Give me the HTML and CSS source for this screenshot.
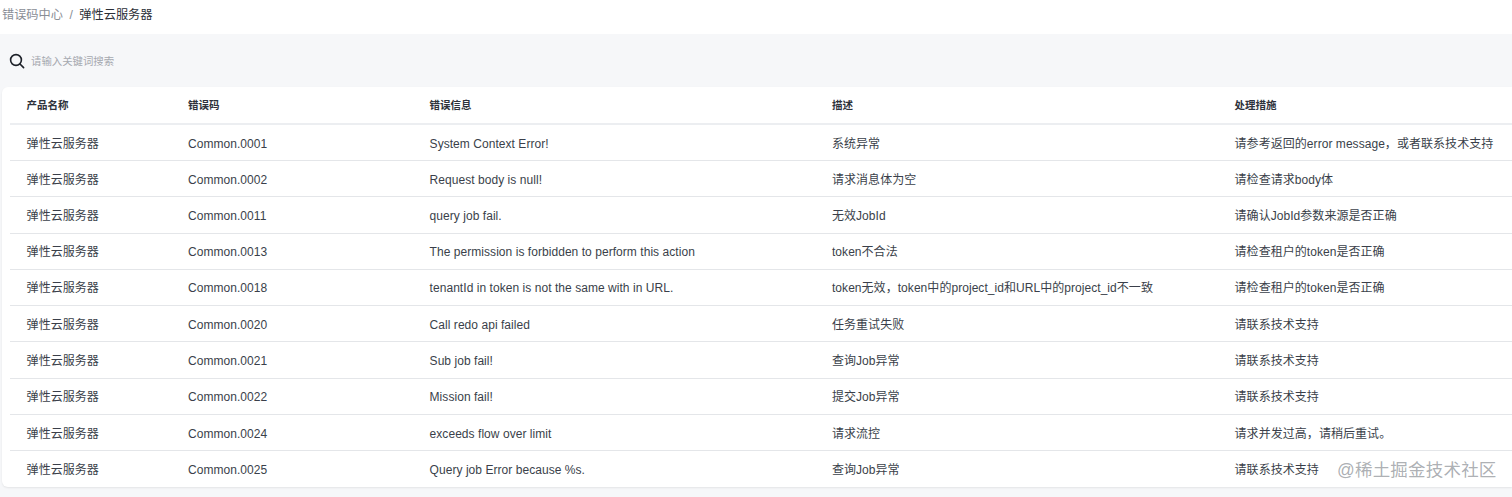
FILE: index.html
```html
<!DOCTYPE html>
<html lang="zh-CN">
<head>
<meta charset="utf-8">
<title>弹性云服务器</title>
<link rel="stylesheet" href="styles.css">
</head>
<body>
<nav class="crumbs"><span class="crumb-link">错误码中心</span><span class="crumb-sep">/</span><span class="crumb-current">弹性云服务器</span></nav>
<main class="content">
  <div class="search">
    <svg class="search-icon" width="16" height="16" viewBox="0 0 16 16" aria-hidden="true"><circle cx="7" cy="7" r="5.4" fill="none" stroke="#1d2129" stroke-width="1.6"/><path d="M11 11l3.6 3.6" fill="none" stroke="#1d2129" stroke-width="1.6" stroke-linecap="round"/></svg>
    <span class="search-text">请输入关键词搜索</span>
  </div>
  <section class="card">
    <table class="codes">
      <colgroup><col class="c1"><col class="c2"><col class="c3"><col class="c4"><col class="c5"></colgroup>
      <thead><tr><th>产品名称</th><th>错误码</th><th>错误信息</th><th>描述</th><th>处理措施</th></tr></thead>
      <tbody>
        <tr><td>弹性云服务器</td><td>Common.0001</td><td>System Context Error!</td><td>系统异常</td><td>请参考返回的error message，或者联系技术支持</td></tr>
        <tr><td>弹性云服务器</td><td>Common.0002</td><td>Request body is null!</td><td>请求消息体为空</td><td>请检查请求body体</td></tr>
        <tr><td>弹性云服务器</td><td>Common.0011</td><td>query job fail.</td><td>无效JobId</td><td>请确认JobId参数来源是否正确</td></tr>
        <tr><td>弹性云服务器</td><td>Common.0013</td><td>The permission is forbidden to perform this action</td><td>token不合法</td><td>请检查租户的token是否正确</td></tr>
        <tr><td>弹性云服务器</td><td>Common.0018</td><td>tenantId in token is not the same with in URL.</td><td>token无效，token中的project_id和URL中的project_id不一致</td><td>请检查租户的token是否正确</td></tr>
        <tr><td>弹性云服务器</td><td>Common.0020</td><td>Call redo api failed</td><td>任务重试失败</td><td>请联系技术支持</td></tr>
        <tr><td>弹性云服务器</td><td>Common.0021</td><td>Sub job fail!</td><td>查询Job异常</td><td>请联系技术支持</td></tr>
        <tr><td>弹性云服务器</td><td>Common.0022</td><td>Mission fail!</td><td>提交Job异常</td><td>请联系技术支持</td></tr>
        <tr><td>弹性云服务器</td><td>Common.0024</td><td>exceeds flow over limit</td><td>请求流控</td><td>请求并发过高，请稍后重试。</td></tr>
        <tr><td>弹性云服务器</td><td>Common.0025</td><td>Query job Error because %s.</td><td>查询Job异常</td><td>请联系技术支持</td></tr>
      </tbody>
    </table>
  </section>
</main>
<div class="watermark">@稀土掘金技术社区</div>
</body>
</html>
```

FILE: styles.css
```css
* { box-sizing: border-box; }
html, body { margin: 0; padding: 0; }
body {
  position: relative;
  height: 497px;
  overflow: hidden;
  background: #f6f7f9;
  color: #3a3f4a;
  font-family: "Liberation Sans", "Noto Sans CJK SC", sans-serif;
  font-size: 12px;
}
.crumbs {
  display: flex;
  align-items: center;
  height: 34px;
  padding: 0 0 4px 2px;
  background: #fff;
  font-size: 12.2px;
  line-height: 20px;
}
.crumb-link { color: #8a8e96; }
.crumb-sep { margin: 0 6.5px; color: #8a8e96; }
.crumb-current { color: #2b2f38; }
.content { padding-left: 2px; }
.search {
  display: flex;
  align-items: center;
  height: 53px;
  padding: 0 0 0 7px;
}
.search-icon { flex: none; }
.search-text { margin-left: 6px; font-size: 10.4px; color: #a6a9b0; }
.card {
  height: 400px;
  padding-left: 8px;
  background: #fff;
  border-radius: 6px 0 0 6px;
  box-shadow: 0 1px 2px rgba(0, 0, 0, 0.08);
}
.codes {
  width: 1502px;
  height: 400px;
  table-layout: fixed;
  border-collapse: collapse;
}
.c1 { width: 161.4px; }
.c2 { width: 241.6px; }
.c3 { width: 402.4px; }
.c4 { width: 402.6px; }
.c5 { width: 294px; }
.codes th, .codes td {
  padding: 0 0 0 16.6px;
  text-align: left;
  white-space: nowrap;
  vertical-align: middle;
  line-height: 18px;
}
.codes th {
  height: 37.3px;
  font-size: 10.5px;
  font-weight: 700;
  color: #2e323b;
  border-bottom: 2px solid #eceef1;
}
.codes td {
  height: 36.27px;
  padding-top: 2px;
  letter-spacing: 0.05px;
  border-bottom: 1px solid #e4e6e9;
}
.codes tbody tr:last-child td { border-bottom: 0; }
.watermark {
  position: absolute;
  left: 1337px;
  top: 458px;
  font-size: 17.5px;
  line-height: 24px;
  letter-spacing: 0.2px;
  color: rgba(120, 125, 132, 0.62);
}
```
